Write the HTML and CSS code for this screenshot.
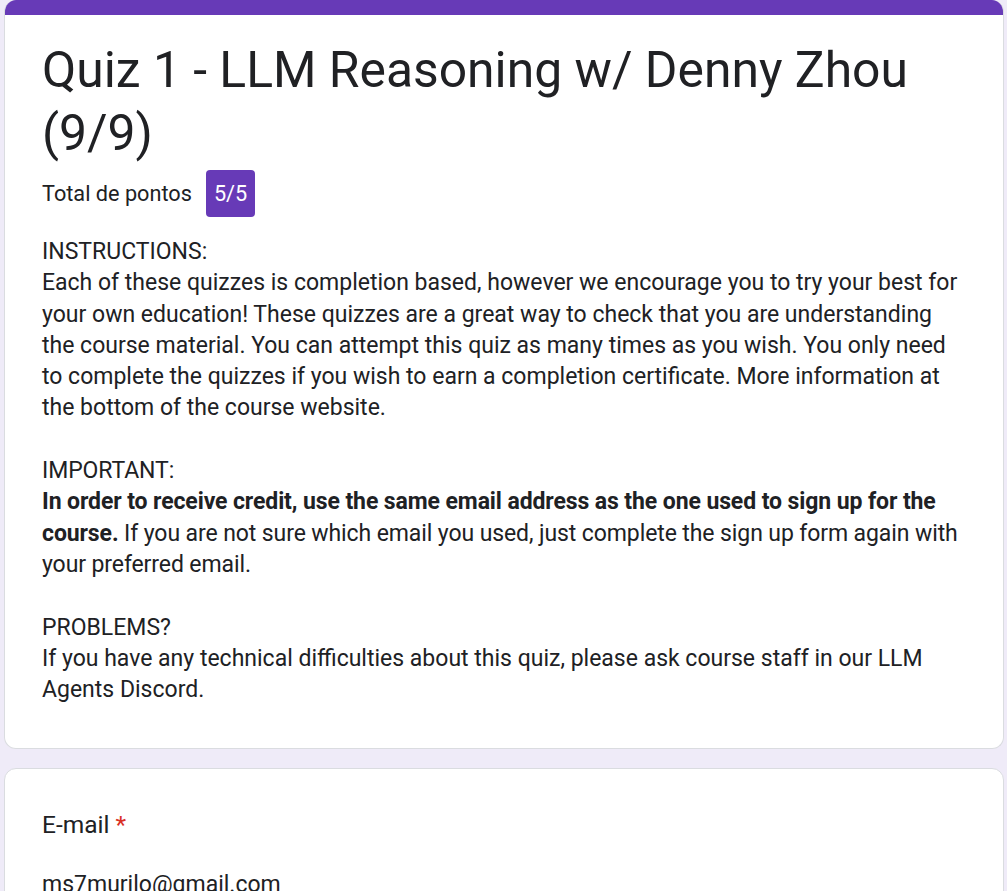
FILE: index.html
```html
<!DOCTYPE html>
<html lang="en">
<head>
<meta charset="utf-8">
<title>Quiz 1 - LLM Reasoning w/ Denny Zhou (9/9)</title>
<link rel="stylesheet" href="styles.css">
</head>
<body>
<main class="form">
  <section class="card header-card">
    <div class="accent"></div>
    <div class="header-body">
      <h1 class="title">Quiz 1 - LLM Reasoning w/ Denny Zhou (9/9)</h1>
      <div class="score-row">
        <span class="score-label">Total de pontos</span>
        <span class="score-badge">5/5</span>
      </div>
      <div class="description">
        <p>INSTRUCTIONS:<br>Each of these quizzes is completion based, however we encourage you to try your best for your own education! These quizzes are a great way to check that you are understanding the course material. You can attempt this quiz as many times as you wish. You only need to complete the quizzes if you wish to earn a completion certificate. More information at the bottom of the course website.</p>
        <p class="tight">IMPORTANT:<br><b>In order to receive credit, use the same email address as the one used to sign up for the course.</b> If you are not sure which email you used, just complete the sign up form again with your preferred email.</p>
        <p>PROBLEMS?<br>If you have any technical difficulties about this quiz, please ask course staff in our LLM Agents Discord.</p>
      </div>
    </div>
  </section>
  <section class="card question-card">
    <div class="question-title">E-mail <span class="required">*</span></div>
    <div class="question-value">ms7murilo@gmail.com</div>
  </section>
</main>
</body>
</html>
```

FILE: styles.css
```css
html, body {
  margin: 0;
  padding: 0;
  background: #efebf8;
}
body {
  font-family: Roboto, "Noto Sans", Arial, sans-serif;
  color: #202124;
}
.form {
  width: 1000px;
  margin-left: 4px;
  display: flex;
  flex-direction: column;
  gap: 19px;
}
.card {
  background: #fff;
  border: 1px solid #dadce0;
  border-radius: 12px;
  overflow: hidden;
}
.header-card {
  border-top: none;
}
.accent {
  height: 15px;
  background: #673ab7;
}
.header-body {
  padding: 24px 37px 43px 37px;
}
.title {
  margin: 0;
  font-size: 49.8px;
  font-weight: 400;
  line-height: 63px;
  color: #202124;
}
.score-row {
  display: flex;
  align-items: center;
  gap: 14px;
  margin-top: 5px;
  font-size: 21.7px;
}
.score-badge {
  background: #673ab7;
  color: #fff;
  border-radius: 4px;
  height: 47px;
  padding: 0 8px;
  display: flex;
  align-items: center;
}
.description {
  margin-top: 19px;
  font-size: 23px;
  line-height: 31.3px;
}
.description p {
  margin: 0 0 31.3px 0;
}
.description p:last-child {
  margin-bottom: 0;
}
.description .tight {
  letter-spacing: -0.1px;
}
.question-card {
  padding: 39px 37px 40px 37px;
}
.question-title {
  font-size: 24.5px;
  line-height: 34px;
}
.required {
  color: #d93025;
}
.question-value {
  margin-top: 27px;
  font-size: 23px;
  line-height: 31px;
}
```
